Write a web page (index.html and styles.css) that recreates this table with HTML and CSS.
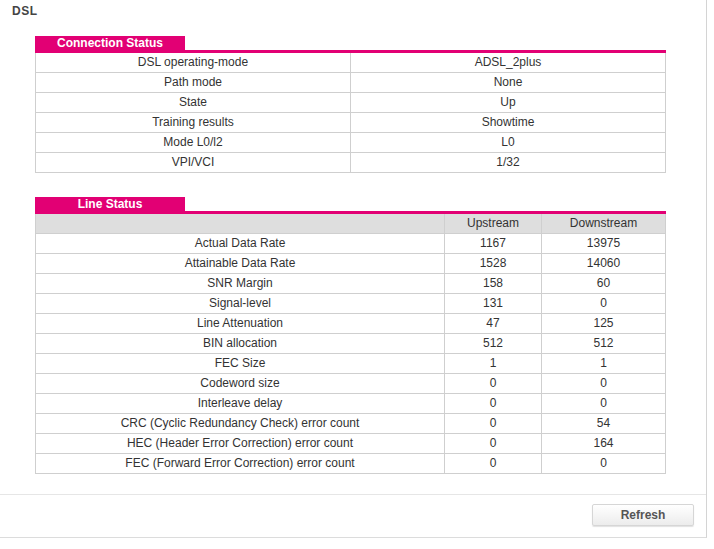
FILE: index.html
```html
<!DOCTYPE html>
<html>
<head>
<meta charset="utf-8">
<link rel="stylesheet" href="styles.css">
</head>
<body>
<div class="panel">
  <div class="title">DSL</div>
  <div class="content">
    <div class="section">
      <div class="tab">Connection Status</div>
      <table class="grid conn">
        <colgroup><col class="c-label"><col class="c-val"></colgroup>
        <tr><td>DSL operating-mode</td><td>ADSL_2plus</td></tr>
        <tr><td>Path mode</td><td>None</td></tr>
        <tr><td>State</td><td>Up</td></tr>
        <tr><td>Training results</td><td>Showtime</td></tr>
        <tr><td>Mode L0/l2</td><td>L0</td></tr>
        <tr><td>VPI/VCI</td><td>1/32</td></tr>
      </table>
    </div>
    <div class="section second">
      <div class="tab">Line Status</div>
      <table class="grid line">
        <colgroup><col class="l-label"><col class="l-up"><col class="l-down"></colgroup>
        <tr class="head"><td></td><td>Upstream</td><td>Downstream</td></tr>
        <tr><td>Actual Data Rate</td><td>1167</td><td>13975</td></tr>
        <tr><td>Attainable Data Rate</td><td>1528</td><td>14060</td></tr>
        <tr><td>SNR Margin</td><td>158</td><td>60</td></tr>
        <tr><td>Signal-level</td><td>131</td><td>0</td></tr>
        <tr><td>Line Attenuation</td><td>47</td><td>125</td></tr>
        <tr><td>BIN allocation</td><td>512</td><td>512</td></tr>
        <tr><td>FEC Size</td><td>1</td><td>1</td></tr>
        <tr><td>Codeword size</td><td>0</td><td>0</td></tr>
        <tr><td>Interleave delay</td><td>0</td><td>0</td></tr>
        <tr><td>CRC (Cyclic Redundancy Check) error count</td><td>0</td><td>54</td></tr>
        <tr><td>HEC (Header Error Correction) error count</td><td>0</td><td>164</td></tr>
        <tr><td>FEC (Forward Error Correction) error count</td><td>0</td><td>0</td></tr>
      </table>
    </div>
  </div>
  <div class="footer">
    <button class="btn">Refresh</button>
  </div>
</div>
</body>
</html>
```

FILE: styles.css
```css
html, body {
  margin: 0;
  padding: 0;
  background: #fff;
  font-family: "Liberation Sans", Arial, sans-serif;
  font-size: 12px;
  color: #333;
}
.panel {
  width: 706px;
  border-right: 1px solid #d4d4d4;
  border-bottom: 1px solid #dcdcdc;
}
.title {
  height: 36px;
  box-sizing: border-box;
  padding: 4px 0 0 12px;
  font-weight: bold;
  color: #444;
  line-height: 14px;
  letter-spacing: 0.5px;
}
.content {
  padding: 0 0 20px 35px;
  border-bottom: 1px solid #e6e6e6;
}
.section.second {
  margin-top: 24px;
}
.tab {
  width: 150px;
  height: 14px;
  line-height: 14px;
  background: #e20074;
  color: #fff;
  font-weight: bold;
  text-align: center;
}
.grid {
  width: 630px;
  border-collapse: collapse;
  table-layout: fixed;
  border-top: 3px solid #e20074;
}
.grid td {
  border: 1px solid #cfcfcf;
  height: 19px;
  padding: 0;
  text-align: center;
  line-height: 19px;
  color: #333;
}
.grid tr:first-child td {
  border-top: 3px solid #e20074;
}
.grid tr.head td {
  background: #dedede;
}
.c-label { width: 315px; }
.c-val { width: 315px; }
.l-label { width: 409px; }
.l-up { width: 97px; }
.l-down { width: 124px; }
.footer {
  height: 42px;
  display: flex;
  justify-content: flex-end;
  align-items: flex-start;
  padding: 9px 12px 0 0;
  box-sizing: border-box;
}
.btn {
  width: 102px;
  height: 22px;
  border: 1px solid #d6d6d6;
  border-radius: 2px;
  background: linear-gradient(#ffffff, #ececec);
  box-shadow: 0 1px 1px rgba(0,0,0,0.12);
  font-family: "Liberation Sans", Arial, sans-serif;
  font-size: 12px;
  font-weight: bold;
  color: #555;
  padding: 0;
}
```
